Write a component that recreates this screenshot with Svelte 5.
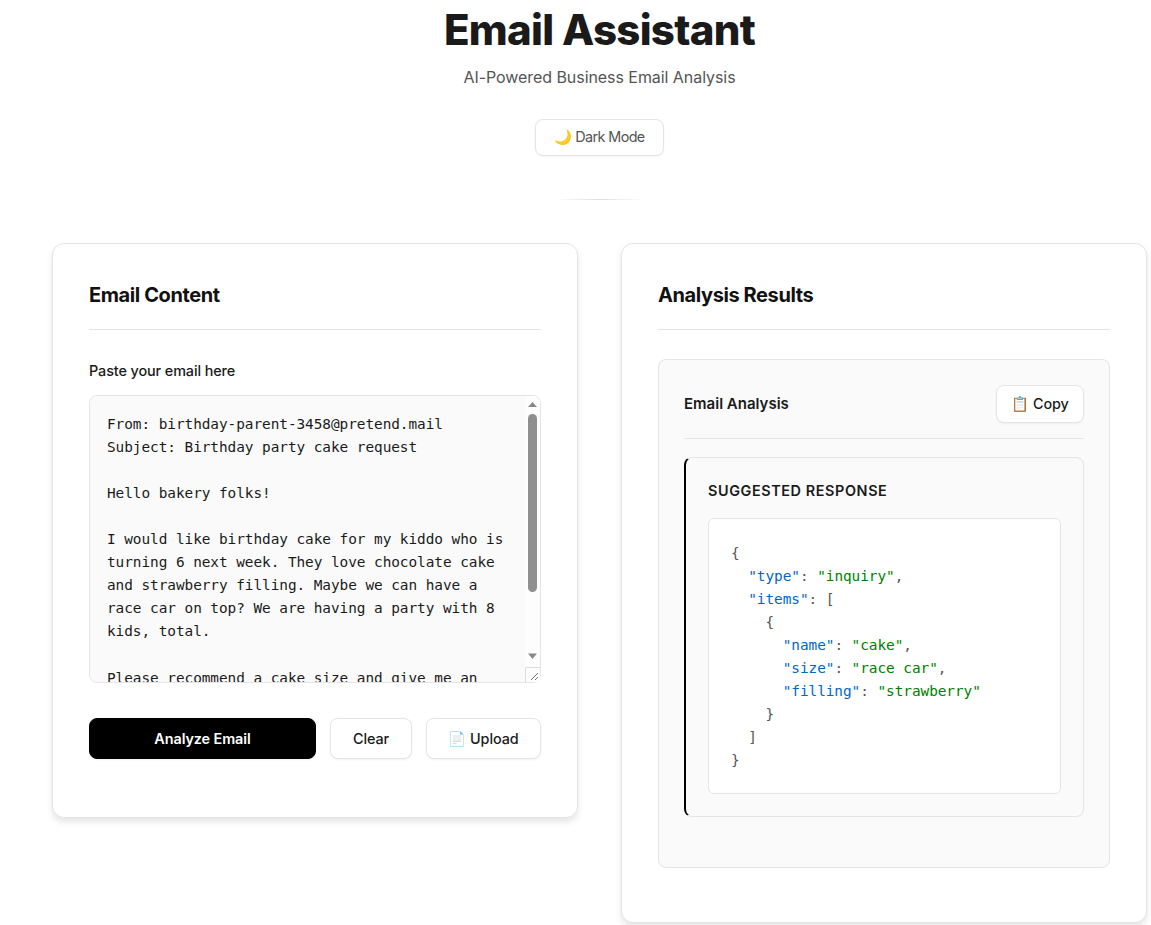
<script>
  const email = `From: birthday-parent-3458@pretend.mail
Subject: Birthday party cake request

Hello bakery folks!

I would like birthday cake for my kiddo who is turning 6 next week. They love chocolate cake and strawberry filling. Maybe we can have a race car on top? We are having a party with 8 kids, total.

Please recommend a cake size and give me an estimate.

Thanks!`;

  // t: plain punctuation, k: json key, s: json string
  const codeLines = [
    [["t", "{"]],
    [["t", "  "], ["k", '"type"'], ["t", ": "], ["s", '"inquiry"'], ["t", ","]],
    [["t", "  "], ["k", '"items"'], ["t", ": ["]],
    [["t", "    {"]],
    [["t", "      "], ["k", '"name"'], ["t", ": "], ["s", '"cake"'], ["t", ","]],
    [["t", "      "], ["k", '"size"'], ["t", ": "], ["s", '"race car"'], ["t", ","]],
    [["t", "      "], ["k", '"filling"'], ["t", ": "], ["s", '"strawberry"']],
    [["t", "    }"]],
    [["t", "  ]"]],
    [["t", "}"]]
  ];
</script>

<div class="page">
  <header class="header">
    <h1>Email Assistant</h1>
    <p class="subtitle">AI-Powered Business Email Analysis</p>
    <button class="btn theme-btn">🌙 Dark Mode</button>
    <div class="rule"></div>
  </header>

  <main class="columns">
    <section class="card left">
      <h2>Email Content</h2>
      <label for="email">Paste your email here</label>
      <div class="editor">
        <textarea id="email" value={email}></textarea>
        <!-- scrollbar drawn over the textarea -->
        <div class="scrollbar">
          <svg width="15" height="18" viewBox="0 0 15 18"><path d="M7.5 6L12 11H3Z" fill="#888" /></svg>
          <div class="thumb"></div>
          <svg class="down" width="15" height="18" viewBox="0 0 15 18"><path d="M3 4.5H12L7.5 10Z" fill="#888" /></svg>
        </div>
      </div>
      <div class="actions">
        <button class="btn primary">Analyze Email</button>
        <button class="btn">Clear</button>
        <button class="btn">📄 Upload</button>
      </div>
    </section>

    <section class="card right">
      <h2>Analysis Results</h2>
      <div class="panel">
        <div class="panel-head">
          <h3>Email Analysis</h3>
          <button class="btn copy">📋 Copy</button>
        </div>
        <div class="result">
          <h4>Suggested Response</h4>
          <div class="code">
            {#each codeLines as line}
              <div class="line">{#each line as [kind, text]}<span class={kind}>{text}</span>{/each}</div>
            {/each}
          </div>
        </div>
      </div>
    </section>
  </main>
</div>

<style>
  :global(body) {
    background: #fff;
    font-family: Inter, "Noto Sans", sans-serif;
    color: #111;
  }

  .page {
    box-sizing: border-box;
    width: 1151px;
    height: 925px;
    overflow: hidden;
    padding-left: 52px;
  }

  .header {
    width: 1095px;
    text-align: center;
    padding-top: 2px;
  }

  h1 {
    margin: 0;
    font-size: 42px;
    line-height: 56px;
    font-weight: 800;
    letter-spacing: -0.7px;
    color: #1a1a1a;
  }

  .subtitle {
    margin: 7px 0 0;
    font-size: 16px;
    line-height: 24px;
    letter-spacing: -0.06px;
    color: #555;
  }

  .btn {
    box-sizing: border-box;
    height: 41px;
    padding: 0;
    background: #fff;
    border: 1px solid #e5e5e5;
    border-radius: 8px;
    box-shadow: 0 1px 2px rgba(0, 0, 0, 0.05);
    font-family: inherit;
    font-size: 14.4px;
    font-weight: 500;
    letter-spacing: -0.08px;
    color: #1a1a1a;
  }

  .theme-btn {
    display: block;
    width: 129px;
    height: 37px;
    margin: 30px auto 0;
    font-weight: 400;
    letter-spacing: -0.6px;
    padding-bottom: 2px;
    color: #555;
  }

  .rule {
    width: 90px;
    height: 1px;
    margin: 43px auto 0;
    background: linear-gradient(90deg, transparent, #ddd, transparent);
  }

  .columns {
    display: flex;
    align-items: flex-start;
    gap: 43px;
    width: 1095px;
    margin-top: 43px;
  }

  .card {
    box-sizing: border-box;
    width: 526px;
    padding: 36px;
    background: #fff;
    border: 1px solid #e5e5e5;
    border-radius: 12px;
    box-shadow: 0 4px 6px rgba(0, 0, 0, 0.1);
  }

  .left {
    height: 575px;
  }

  .right {
    height: 680px;
  }

  h2 {
    margin: 0 0 29px;
    padding-bottom: 19px;
    border-bottom: 1px solid #e5e5e5;
    font-size: 20px;
    line-height: 30px;
    font-weight: 700;
    letter-spacing: -0.4px;
    color: #111;
  }

  label {
    display: block;
    margin-bottom: 12px;
    font-size: 14.4px;
    line-height: 24px;
    font-weight: 500;
    letter-spacing: -0.1px;
    color: #1a1a1a;
  }

  .editor {
    position: relative;
  }

  textarea {
    display: block;
    box-sizing: border-box;
    width: 100%;
    height: 288px;
    padding: 17px 32px 17px 17px;
    background: #fafafa;
    border: 1px solid #e5e5e5;
    border-radius: 8px;
    font-family: "DejaVu Sans Mono", "Liberation Mono", monospace;
    font-size: 14.4px;
    line-height: 1.6;
    letter-spacing: -0.05px;
    color: #1a1a1a;
  }

  textarea::-webkit-resizer {
    background-color: #fdfdfd;
    background-image: url("data:image/svg+xml,%3Csvg xmlns='http://www.w3.org/2000/svg' width='15' height='15'%3E%3Cpath d='M.5 15V.5H15' fill='none' stroke='%23ddd'/%3E%3Cpath d='M6 13L13 6M10 13L13 10' stroke='%23777'/%3E%3C/svg%3E");
  }

  .scrollbar {
    position: absolute;
    top: 1px;
    right: 1px;
    bottom: 16px;
    width: 15px;
    display: flex;
    flex-direction: column;
    background: #fdfdfd;
    border-top-right-radius: 7px;
    pointer-events: none;
  }

  .scrollbar svg {
    display: block;
    flex: none;
  }

  .thumb {
    height: 178px;
    margin: 0 3px;
    background: #8f8f8f;
    border-radius: 5px;
  }

  .down {
    margin-top: auto;
  }

  .actions {
    display: grid;
    grid-template-columns: 1fr 82px 115px;
    gap: 14px;
    margin-top: 35px;
  }

  .primary {
    background: #000;
    border-color: #000;
    color: #fff;
    font-weight: 600;
  }

  .panel {
    box-sizing: border-box;
    height: 509px;
    padding: 25px;
    background: #fafafa;
    border: 1px solid #e5e5e5;
    border-radius: 8px;
  }

  .panel-head {
    display: flex;
    align-items: center;
    justify-content: space-between;
    padding-bottom: 15px;
    border-bottom: 1px solid #e5e5e5;
    margin-bottom: 18px;
  }

  h3 {
    margin: 0 0 2px;
    font-size: 15px;
    font-weight: 600;
    color: #1a1a1a;
  }

  .copy {
    width: 88px;
    height: 38px;
  }

  .result {
    box-sizing: border-box;
    height: 360px;
    padding: 22px;
    border: 1px solid #e5e5e5;
    border-left: 2px solid #000;
    border-radius: 8px;
  }

  h4 {
    margin: 0 0 16px;
    font-size: 14.4px;
    line-height: 22px;
    font-weight: 600;
    letter-spacing: 0.6px;
    text-transform: uppercase;
    color: #1a1a1a;
  }

  .code {
    box-sizing: border-box;
    height: 276px;
    padding: 23px 22px;
    background: #fff;
    border: 1px solid #e5e5e5;
    border-radius: 6px;
    font-family: "DejaVu Sans Mono", "Liberation Mono", monospace;
    font-size: 14.4px;
    line-height: 1.6;
    letter-spacing: -0.05px;
    color: #555;
  }

  .line {
    white-space: pre;
    height: 23px;
  }

  .k {
    color: #0066cc;
  }

  .s {
    color: #008000;
  }
</style>
